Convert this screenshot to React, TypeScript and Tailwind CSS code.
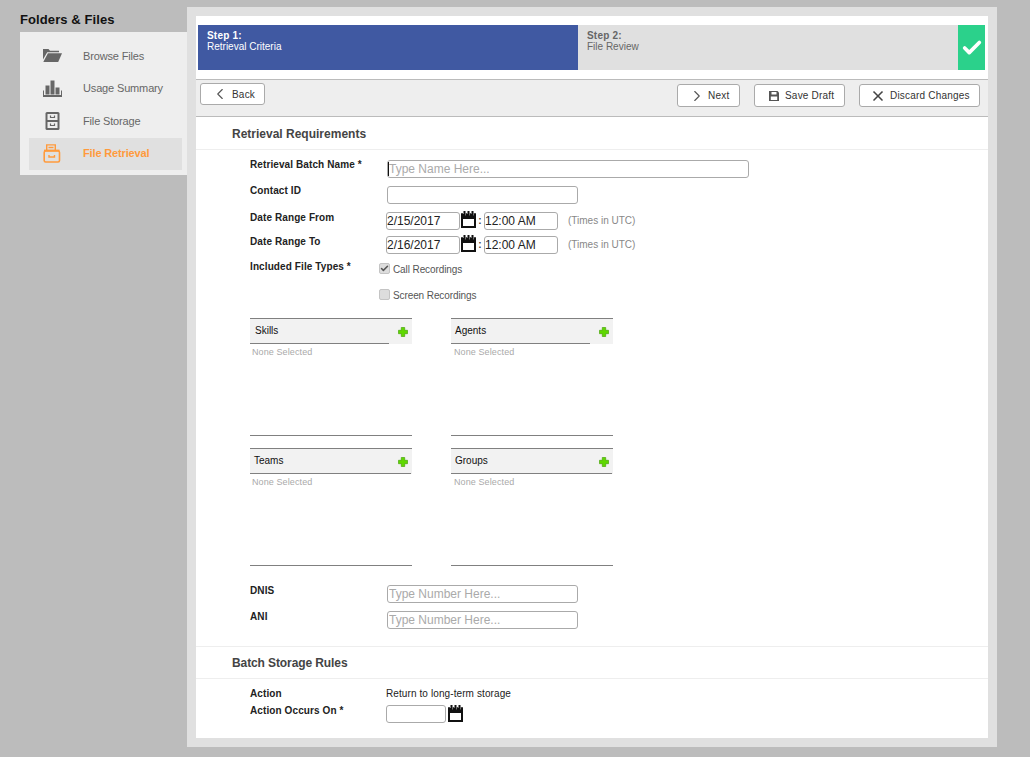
import { Check, ChevronLeft, ChevronRight, X } from "lucide-react"

function FolderIcon() {
  return (
    <svg width="19" height="13" viewBox="0 0 19 13" fill="#666">
      <path d="M0 0h5.5L7 1.8h9V3.2H4.2L0 10.5z" />
      <path d="M4.9 4.2H19L15.2 13H0.3z" />
    </svg>
  )
}

function BarsIcon() {
  return (
    <svg width="19" height="17" viewBox="0 0 19 17" fill="#666">
      <rect x="2.5" y="5.5" width="4" height="9" />
      <rect x="7.5" y="0.5" width="4" height="14" />
      <rect x="12.5" y="7.5" width="4" height="7" />
      <path d="M0 10.5h1v4.5h17v-4.5h1V17H0z" />
    </svg>
  )
}

function CabinetIcon() {
  return (
    <svg width="15" height="18" viewBox="0 0 15 18">
      <rect x="0.5" y="0" width="14" height="18" rx="1.5" fill="#666" />
      <rect x="2.5" y="2" width="10" height="6" fill="#eee" />
      <rect x="2.5" y="10" width="10" height="6" fill="#eee" />
      <path d="M5.5 3.5v2h4v-2M5.5 11.5v2h4v-2" fill="none" stroke="#666" strokeWidth="1.2" />
    </svg>
  )
}

function RetrievalIcon() {
  return (
    <svg width="18" height="19" viewBox="0 0 18 19" fill="none" stroke="#ff9a3c" strokeWidth="1.4">
      <path d="M3.7 6V.9h8.6V6" />
      <path d="M5.5 3.5h5" />
      <path d="M1 6.5h15.5" strokeWidth="1.8" />
      <rect x="1.2" y="7" width="15.3" height="11" rx="1.5" strokeWidth="1.6" />
      <path d="M6 11v2h5.5v-2" />
    </svg>
  )
}

function SaveIcon() {
  return (
    <svg width="10" height="10" viewBox="0 0 10 10" fill="#555" className="shrink-0">
      <path d="M0 0h8.5L10 1.5V10H0z" />
      <rect x="2.5" y="1" width="5" height="2.5" fill="#fff" />
      <rect x="1.8" y="5.5" width="6.4" height="3.5" fill="#fff" />
    </svg>
  )
}

function CalendarIcon() {
  return (
    <svg width="15" height="17" viewBox="0 0 15 17" fill="#111" className="shrink-0">
      <path d="M0 3h15v14H0z" />
      <rect x="2.5" y="0" width="2" height="4" />
      <rect x="6.5" y="0" width="2" height="4" />
      <rect x="10.5" y="0" width="2" height="4" />
      <path d="M0 2.2h2v2.4H0zM4.7 2.2h1.6v2.4H4.7zM8.7 2.2h1.6v2.4H8.7zM12.7 2.2H15v2.4h-2.3z" />
      <path d="M4.5 3h.4v1.6h-.4zM8.5 3h.4v1.6h-.4zM12.5 3h.4v1.6h-.4z" fill="#fff" />
      <rect x="2" y="8" width="11" height="7" fill="#fff" />
    </svg>
  )
}

function PlusIcon() {
  return (
    <svg width="10" height="10" viewBox="0 0 10 10" className="shrink-0">
      <path d="M3.3.5h3.4v2.8h2.8v3.4H6.7v2.8H3.3V6.7H.5V3.3h2.8z" fill="#5fd800" stroke="#4aa50c" strokeWidth="0.7" />
    </svg>
  )
}

function Label({ text, className = "" }: { text: string; className?: string }) {
  return (
    <div className={`w-[136px] shrink-0 h-[12px] leading-[12px] text-[10px] font-bold tracking-[0.1px] text-[#222] ${className}`}>
      {text}
    </div>
  )
}

function TextBox({ placeholder, className, value }: { placeholder?: string; className: string; value?: string }) {
  return (
    <input
      readOnly
      placeholder={placeholder}
      defaultValue={value}
      className={`block h-[18px] border border-[#aaa] rounded-[3px] bg-white text-[12px] text-[#222] placeholder:text-[#aaa] outline-none ${className}`}
    />
  )
}

function DateRow({ label, date, className }: { label: string; date: string; className: string }) {
  return (
    <div className={`flex pl-[54px] ${className}`}>
      <Label text={label} />
      <TextBox className="w-[74px] px-0" value={date} />
      <div className="ml-px -mt-px">
        <CalendarIcon />
      </div>
      <span className="w-[8px] text-center text-[10px] leading-[18px] font-bold text-[#444]">:</span>
      <TextBox className="w-[74px] px-0" value="12:00 AM" />
      <span className="ml-[10px] text-[10px] leading-[18px] text-[#888]">(Times in UTC)</span>
    </div>
  )
}

function Checkbox({ checked, text, className }: { checked?: boolean; text: string; className: string }) {
  return (
    <div className={`flex items-center h-[11px] pl-[183px] ${className}`}>
      <span className="w-[11px] h-[11px] flex items-center justify-center rounded-[2px] border border-[#c4c4c4] bg-[#ddd]">
        {checked && <Check size={9} strokeWidth={4} className="text-[#555]" />}
      </span>
      <span className="ml-[3px] pt-[2px] text-[10px] tracking-[-0.1px] text-[#555]">{text}</span>
    </div>
  )
}

function PickerPanel({ title, shortLine, right, titleClass }: { title: string; shortLine?: boolean; right?: boolean; titleClass: string }) {
  return (
    <div className="w-[162px] h-[118px] border-t border-b border-[#808080]">
      <div className="h-[25px] bg-[#f2f2f2] flex">
        <div className={`${shortLine ? "w-[139px]" : "w-[161px]"} h-[25px] border-b border-[#808080] text-[10px] leading-[23px] text-[#111] ${titleClass}`}>
          {title}
        </div>
        <div className={`flex-1 flex justify-end pt-[8px] pr-[4px] ${shortLine ? "" : "-ml-[14px]"}`}>
          <PlusIcon />
        </div>
      </div>
      <div className={`${right ? "pl-[3px]" : "pl-[2px]"} mt-[2px] text-[9px] tracking-[0.1px] text-[#aaa]`}>None Selected</div>
    </div>
  )
}

function ToolButton({ icon, text, className }: { icon: React.ReactNode; text: string; className: string }) {
  return (
    <div className={`flex items-center bg-white border border-[#aaa] rounded-[3px] text-[10px] tracking-[0.2px] text-[#333] ${className}`}>
      {icon}
      <span>{text}</span>
    </div>
  )
}

const navItems = [
  { name: "Browse Files", icon: <FolderIcon /> },
  { name: "Usage Summary", icon: <BarsIcon /> },
  { name: "File Storage", icon: <CabinetIcon /> },
  { name: "File Retrieval", icon: <RetrievalIcon />, active: true },
]

export default function App() {
  return (
    <div className="w-[1030px] h-[757px] overflow-hidden flex bg-[#bcbcbc] font-['Liberation_Sans',Arial,sans-serif]">
      {/* Sidebar */}
      <div className="w-[187px] shrink-0 pl-[20px]">
        <div className="h-[32px] pt-[12px] text-[13px] leading-[16px] font-bold tracking-[0.1px] text-[#111]">
          Folders &amp; Files
        </div>
        <div className="w-[167px] h-[143px] bg-[#eee] pt-[8px] pl-[9px] pr-[5px]">
          <div className="h-[130px] flex flex-col">
            {navItems.map((item) => (
              <div
                key={item.name}
                className={`flex-1 flex items-center pb-px text-[11px] tracking-[-0.15px] ${item.active ? "bg-[#e0e0e0] font-bold text-[#ff9a3c]" : "text-[#666]"}`}
              >
                <div className="w-[20px] ml-[13px] flex justify-center">{item.icon}</div>
                <span className="ml-[21px]">{item.name}</span>
              </div>
            ))}
          </div>
        </div>
      </div>

      {/* Main panel */}
      <div className="w-[810px] h-[740px] mt-[7px] p-[9px] bg-[#e0e0e0]">
        <div className="h-[722px] bg-white pt-[9px]">
          <div className="flex h-[45px] ml-[2px] mr-[3px]">
            <div className="w-[380px] bg-[#4059a2] pl-[9px] pt-[5px] text-[10px] leading-[11px] text-white">
              <div className="font-bold tracking-[0.2px]">Step 1:</div>
              <div>Retrieval Criteria</div>
            </div>
            <div className="flex-1 bg-[#e0e0e0] pl-[9px] pt-[5px] text-[10px] leading-[11px] text-[#666]">
              <div className="font-bold tracking-[0.2px]">Step 2:</div>
              <div>File Review</div>
            </div>
            <div className="w-[27px] bg-[#2bd18b] flex items-center justify-center">
              <Check size={22} strokeWidth={4} className="text-white" />
            </div>
          </div>

          {/* Toolbar */}
          <div className="mt-[9px] h-[38px] flex justify-between items-start bg-[#eee] border-t border-b border-[#bbb]">
            <ToolButton
              icon={<ChevronLeft size={18} strokeWidth={1.5} className="shrink-0 text-[#555]" />}
              text="Back"
              className="ml-[4px] mt-[3px] w-[65px] h-[22px] pl-[10px] gap-[3px]"
            />
            <div className="mr-[8px] mt-[4px] flex gap-[14px]">
              <ToolButton
                icon={<ChevronRight size={18} strokeWidth={1.5} className="shrink-0 text-[#555]" />}
                text="Next"
                className="w-[63px] h-[23px] pl-[10px] gap-[2px]"
              />
              <ToolButton icon={<SaveIcon />} text="Save Draft" className="w-[91px] h-[23px] pl-[14px] gap-[6px]" />
              <ToolButton
                icon={<X size={16} strokeWidth={2.5} className="shrink-0 text-[#444]" />}
                text="Discard Changes"
                className="w-[121px] h-[23px] pl-[10px] gap-[4px]"
              />
            </div>
          </div>

          <div className="h-[33px] pl-[36px] border-b border-[#eee] text-[12px] font-bold leading-[34px] text-[#444]">
            Retrieval Requirements
          </div>

          {/* Retrieval form */}
          <div className="flex pl-[54px] mt-[10px]">
            <Label text="Retrieval Batch Name *" className="-mt-px" />
            <div className="relative ml-px">
              <TextBox placeholder="Type Name Here..." className="w-[362px] px-px" />
              <span className="absolute left-[1px] top-[2px] h-[14px] w-px bg-[#111]" />
            </div>
          </div>
          <div className="flex pl-[54px] mt-[8px]">
            <Label text="Contact ID" className="-mt-px" />
            <div className="ml-px">
              <TextBox className="w-[191px] px-px" />
            </div>
          </div>
          <DateRow label="Date Range From" date="2/15/2017" className="mt-[8px]" />
          <DateRow label="Date Range To" date="2/16/2017" className="mt-[6px]" />
          <div className="pl-[54px] mt-[7px] -mb-[10px]">
            <Label text="Included File Types *" />
          </div>
          <Checkbox checked text="Call Recordings" className="mt-0" />
          <Checkbox text="Screen Recordings" className="mt-[15px]" />

          <div className="mt-[18px] pl-[54px] grid grid-cols-[162px_162px] gap-x-[39px] gap-y-[12px]">
            <PickerPanel title="Skills" shortLine titleClass="pl-[5px]" />
            <PickerPanel title="Agents" shortLine right titleClass="pl-[4px]" />
            <PickerPanel title="Teams" titleClass="pl-[4px]" />
            <PickerPanel title="Groups" right titleClass="pl-[4px]" />
          </div>

          <div className="flex pl-[54px] mt-[19px]">
            <Label text="DNIS" />
            <div className="ml-px">
              <TextBox placeholder="Type Number Here..." className="w-[191px] px-px" />
            </div>
          </div>
          <div className="flex pl-[54px] mt-[8px]">
            <Label text="ANI" />
            <div className="ml-px">
              <TextBox placeholder="Type Number Here..." className="w-[191px] px-px" />
            </div>
          </div>

          <div className="mt-[17px] border-t border-[#eee]">
            <div className="h-[32px] pl-[36px] border-b border-[#eee] text-[12px] font-bold leading-[32px] tracking-[-0.1px] text-[#444]">
              Batch Storage Rules
            </div>
          </div>

          <div className="flex pl-[54px] mt-[9px]">
            <Label text="Action" />
            <span className="text-[10px] leading-[12px] tracking-[0.1px] text-[#222]">Return to long-term storage</span>
          </div>
          <div className="flex pl-[54px] mt-[5px]">
            <Label text="Action Occurs On *" />
            <TextBox className="w-[60px] px-px" />
            <div className="ml-[2px]">
              <CalendarIcon />
            </div>
          </div>
        </div>
      </div>
    </div>
  )
}
